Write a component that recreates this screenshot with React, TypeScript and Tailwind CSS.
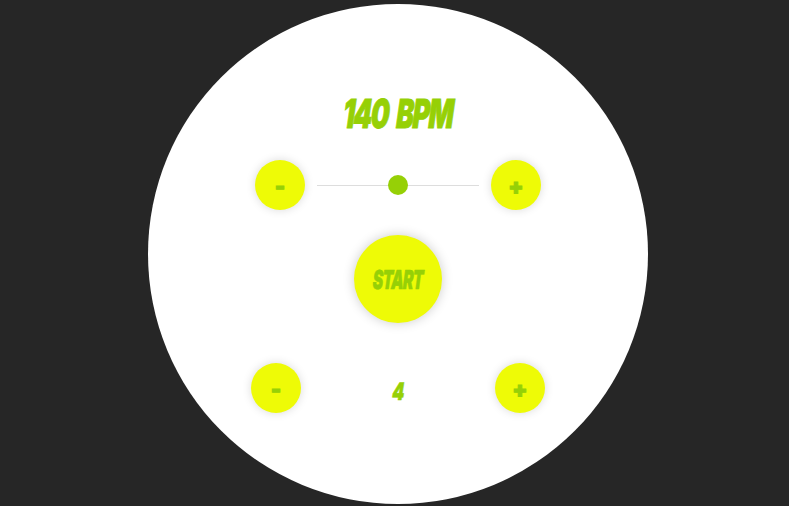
const comic = "font-['Inter','Liberation_Sans',sans-serif] font-black italic text-[#96d006]";

function RoundButton({ label }: { label: string }) {
  return (
    <button className={`w-[50px] h-[50px] rounded-full bg-[#eefb06] shadow-[0_0_10px_rgba(0,0,0,0.15)] flex items-center justify-center shrink-0 text-[22px] leading-none ${comic}`}>
      <span className="not-italic pt-[2px] [-webkit-text-stroke:1px_#96d006]">{label}</span>
    </button>
  );
}

export default function App() {
  return (
    <div className="h-screen overflow-hidden bg-[#262626] pt-[4px] pl-[148px]">
      {/* Metronome dial */}
      <div className="w-[500px] h-[500px] rounded-full bg-white flex flex-col items-center pt-[91px]">
        <h1 className={`h-[38px] flex items-center text-[40px] tracking-[-2px] [word-spacing:6px] scale-x-[0.66] -skew-x-3 whitespace-nowrap [-webkit-text-stroke:1px_#96d006] ${comic}`}>140 BPM</h1>

        <div className="mt-[27px] flex items-center gap-3">
          <RoundButton label="-" />
          <div className="relative w-[162px] h-px bg-[#dddddd]">
            <div className="absolute left-[71px] top-[-10px] w-5 h-5 rounded-full bg-[#96d006]" />
          </div>
          <RoundButton label="+" />
        </div>

        <button className={`mt-[25px] w-[88px] h-[88px] rounded-full bg-[#eefb06] shadow-[0_0_12px_rgba(0,0,0,0.2)] flex items-center justify-center ${comic}`}>
          <span className="text-[26px] tracking-[-1px] scale-x-[0.6] -skew-x-3 [-webkit-text-stroke:0.6px_#96d006]">START</span>
        </button>

        <div className="mt-[40px] w-[294px] flex items-center justify-between">
          <RoundButton label="-" />
          <span className={`text-[24px] leading-none pt-2 scale-x-[0.72] -skew-x-3 [-webkit-text-stroke:0.6px_#96d006] ${comic}`}>4</span>
          <RoundButton label="+" />
        </div>
      </div>
    </div>
  );
}
